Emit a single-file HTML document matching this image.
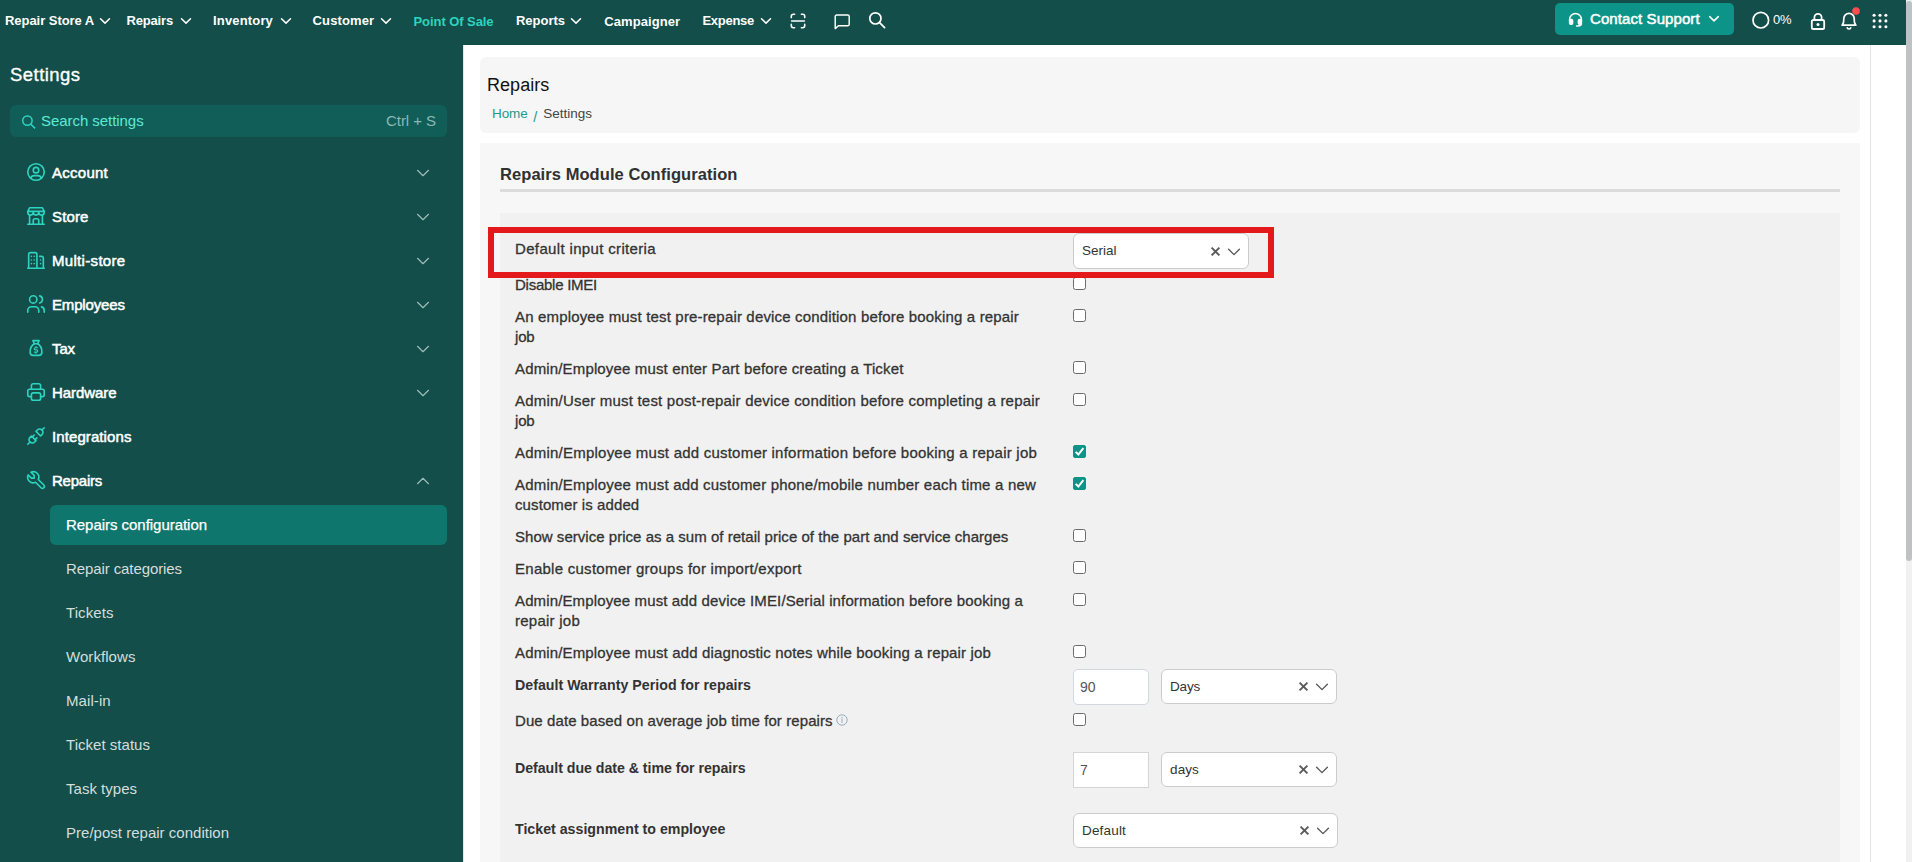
<!DOCTYPE html>
<html lang="en">
<head>
<meta charset="utf-8">
<title>Repairs - Settings</title>
<style>
*{box-sizing:border-box;margin:0;padding:0}
html,body{width:1912px;height:862px;overflow:hidden;background:#fff}
body{font-family:"Liberation Sans",sans-serif;color:#333;position:relative}
.abs{position:absolute}
svg{display:block}
/* ---------- header ---------- */
#hdr{position:absolute;left:0;top:0;width:1906px;height:45px;background:#134e4a}
.nav{position:absolute;top:0;height:41px;line-height:41px;color:#fff;font-size:13px;font-weight:bold;white-space:nowrap}
.nav.pos{color:#2dd4bf}
.chev{position:absolute;top:15px;width:12px;height:12px}
.hic{position:absolute}
#support{position:absolute;left:1555px;top:3px;width:179px;height:32px;border-radius:5px;background:#0d9488;color:#fff}
#support>span{position:absolute;left:35px;top:0;line-height:32px;font-size:15px;white-space:nowrap;-webkit-text-stroke:.5px #fff}
/* ---------- sidebar ---------- */
#side{position:absolute;left:0;top:45px;width:463px;height:817px;background:#134e4a}
#side h2{position:absolute;left:10px;top:18px;font-size:18.5px;line-height:24px;font-weight:normal;color:#fff;-webkit-text-stroke:.35px #fff}
#search{position:absolute;left:10px;top:60px;width:437px;height:32px;border-radius:6px;background:#115e59}
#search .ph{position:absolute;left:31px;top:0;line-height:32px;font-size:15px;color:#5eead4}
#search .kb{position:absolute;right:11px;top:0;line-height:32px;font-size:15px;color:#8ab8b3}
.mi{position:absolute;left:52px;height:24px;line-height:24px;font-size:15px;color:#fff;white-space:nowrap;-webkit-text-stroke:.5px #fff}
.mic{position:absolute;left:25px;width:22px;height:22px}
.mch{position:absolute;left:416px;width:14px;height:14px}
.si{position:absolute;left:66px;height:24px;line-height:24px;font-size:15px;color:#d4dedd;white-space:nowrap}
#sel{position:absolute;left:50px;top:460px;width:397px;height:40px;border-radius:6px;background:#0f766e}
/* ---------- main ---------- */
#vline{position:absolute;left:463px;top:45px;width:1px;height:817px;background:#e3e3ee}
#vline2{position:absolute;left:1870px;top:45px;width:1px;height:817px;background:#e3e3ee}
#card1{position:absolute;left:480px;top:57px;width:1380px;height:76px;border-radius:6px;background:#f6f6f6}
#card2{position:absolute;left:480px;top:143px;width:1380px;height:740px;background:#f7f7f7}
#panel{position:absolute;left:500px;top:213px;width:1340px;height:660px;background:#f1f1f1}
#hr{position:absolute;left:500px;top:189px;width:1340px;height:3px;background:#dcdcdc}
.lbl{position:absolute;left:515px;font-size:15px;line-height:20px;color:#333;white-space:nowrap;-webkit-text-stroke:.3px #333}
.lbl.b{font-weight:bold;-webkit-text-stroke:0;font-size:14.2px}
.cb svg{position:absolute;left:-1px;top:-1px}
.cb{position:absolute;left:1073px;width:13px;height:13px;border:1px solid #6b6b6b;border-radius:2.5px;background:#fff}
.cb.on{background:#0d9488;border-color:#0d9488;border-radius:2px}
.sel{position:absolute;height:35px;border:1px solid #ccc;border-radius:6px;background:#fff;font-size:13.5px;color:#333}
.sel span.v{position:absolute;left:8px;top:0;line-height:33px}
.inp{position:absolute;left:1073px;width:76px;height:36px;border:1px solid #d5d5d5;background:#fff;font-size:14px;color:#555}
.inp span{position:absolute;left:6px;top:0;line-height:34px}
/* scrollbar */
#sbt{position:absolute;left:1906px;top:0;width:6px;height:862px;background:#f1f1f1}
#sbh{position:absolute;left:1906px;top:1px;width:6px;height:560px;background:#c0c1c5;border-radius:3px}
.slash{color:#1f9a8a;display:inline-block;margin:0 6px 0 5.500px;position:relative;top:3.500px;font-size:14.500px;line-height:14px}
#ttl{left:487px;top:71px;line-height:28px;font-size:18px;color:#111;white-space:nowrap}
#bc{left:492px;top:104px;line-height:20px;font-size:13.5px;color:#444;white-space:nowrap}
#h3{left:500px;top:162px;line-height:24px;font-size:16.5px;font-weight:bold;color:#303030;white-space:nowrap}
#red{left:488px;top:227px;width:786px;height:51px;border:6px solid #e3191c}
.si.on{color:#fff;-webkit-text-stroke:.25px #fff}
</style>
</head>
<body>
<div id="hdr">
<div class="nav" style="left:5px;top:0px"><span class="ln" id="n0" style="letter-spacing:-0.045px;">Repair Store A</span></div><svg class="chev" style="left:99.4px" viewBox="0 0 12 12"><path d="M1.5 3.7 L6 8.1 L10.5 3.7" fill="none" stroke="#fff" stroke-width="1.5" stroke-linecap="round" stroke-linejoin="round"/></svg>
<div class="nav" style="left:126.5px;top:0px"><span class="ln" id="n1" style="letter-spacing:-0.172px;">Repairs</span></div><svg class="chev" style="left:179.5px" viewBox="0 0 12 12"><path d="M1.5 3.7 L6 8.1 L10.5 3.7" fill="none" stroke="#fff" stroke-width="1.5" stroke-linecap="round" stroke-linejoin="round"/></svg>
<div class="nav" style="left:213px;top:0px"><span class="ln" id="n2" style="letter-spacing:0.165px;">Inventory</span></div><svg class="chev" style="left:279.5px" viewBox="0 0 12 12"><path d="M1.5 3.7 L6 8.1 L10.5 3.7" fill="none" stroke="#fff" stroke-width="1.5" stroke-linecap="round" stroke-linejoin="round"/></svg>
<div class="nav" style="left:312.6px;top:0px"><span class="ln" id="n3" style="letter-spacing:0.114px;">Customer</span></div><svg class="chev" style="left:380px" viewBox="0 0 12 12"><path d="M1.5 3.7 L6 8.1 L10.5 3.7" fill="none" stroke="#fff" stroke-width="1.5" stroke-linecap="round" stroke-linejoin="round"/></svg>
<div class="nav pos" style="left:413.5px;top:1px"><span class="ln" id="n4" style="letter-spacing:-0.070px;">Point Of Sale</span></div>
<div class="nav" style="left:516px;top:0px"><span class="ln" id="n5" style="letter-spacing:-0.018px;">Reports</span></div><svg class="chev" style="left:570px" viewBox="0 0 12 12"><path d="M1.5 3.7 L6 8.1 L10.5 3.7" fill="none" stroke="#fff" stroke-width="1.5" stroke-linecap="round" stroke-linejoin="round"/></svg>
<div class="nav" style="left:604.3px;top:1px"><span class="ln" id="n6" style="letter-spacing:0.066px;">Campaigner</span></div>
<div class="nav" style="left:702.4px;top:0px"><span class="ln" id="n7" style="letter-spacing:-0.269px;">Expense</span></div><svg class="chev" style="left:760px" viewBox="0 0 12 12"><path d="M1.5 3.7 L6 8.1 L10.5 3.7" fill="none" stroke="#fff" stroke-width="1.5" stroke-linecap="round" stroke-linejoin="round"/></svg>
<svg class="hic" style="left:789px;top:12px" width="18" height="18" viewBox="0 0 18 18" fill="none" stroke="#fff" stroke-width="1.6" stroke-linecap="round" stroke-linejoin="round"><path d="M2.3 5.6V4.2a1.9 1.9 0 0 1 1.9-1.9h1.4M12.4 2.3h1.4a1.9 1.9 0 0 1 1.9 1.9v1.4M15.7 12.4v1.4a1.9 1.9 0 0 1-1.9 1.9h-1.4M5.6 15.7H4.2a1.9 1.9 0 0 1-1.9-1.9v-1.4M2.6 9h12.8"/></svg>
<svg class="hic" style="left:833px;top:13px" width="18" height="18" viewBox="0 0 18 18" fill="none" stroke="#fff" stroke-width="1.45" stroke-linecap="round" stroke-linejoin="round"><path d="M16.2 11.2a1.6 1.6 0 0 1-1.6 1.6H5.4L2.2 15.6V3.6A1.6 1.6 0 0 1 3.8 2h10.8a1.6 1.6 0 0 1 1.6 1.6z"/></svg>
<svg class="hic" style="left:868px;top:11px" width="18" height="18" viewBox="0 0 18 18" fill="none" stroke="#fff" stroke-width="1.7" stroke-linecap="round"><circle cx="7.4" cy="7.4" r="5.6"/><path d="M11.6 11.6l5 5"/></svg>
<div id="support"><svg class="hic" style="left:13px;top:9px" width="15" height="15" viewBox="0 0 15 15" fill="none" stroke="#fff" stroke-width="1.5" stroke-linecap="round" stroke-linejoin="round"><path d="M1.6 9V7.4a5.9 5.9 0 0 1 11.8 0V9"/><rect x="1.6" y="7.6" width="3" height="4.6" rx="1.2" fill="#fff"/><rect x="10.400" y="7.600" width="3" height="4.600" rx="1.200" fill="#fff"/><path d="M13.4 11.6c0 1.6-1.4 2.4-3.4 2.4H8.6"/></svg><span><span class="ln" id="cs" style="letter-spacing:0.086px;">Contact Support</span></span><svg class="hic" style="left:153px;top:10px" width="12" height="12" viewBox="0 0 12 12"><path d="M1.7 3.7 L6 7.8 L10.3 3.7" fill="none" stroke="#fff" stroke-width="1.6" stroke-linecap="round" stroke-linejoin="round"/></svg></div>
<svg class="hic" style="left:1751px;top:10px" width="20" height="20" viewBox="0 0 20 20"><circle cx="9.8" cy="10.2" r="7.8" fill="none" stroke="#fff" stroke-width="1.7"/></svg>
<div class="abs" style="left:1773px;top:10px;line-height:20px;font-size:13px;color:#fff;letter-spacing:-.2px">0%</div>
<svg class="hic" style="left:1809px;top:12px" width="18" height="19" viewBox="0 0 18 19" fill="none" stroke="#fff" stroke-width="1.8" stroke-linejoin="round"><rect x="2.8" y="8" width="12.4" height="9" rx="1.6"/><path d="M5.4 8V5.4a3.6 3.6 0 0 1 7.2 0V8"/><circle cx="9" cy="12.6" r="1.5" fill="#fff" stroke="none"/></svg>
<svg class="hic" style="left:1839px;top:6px" width="24" height="26" viewBox="0 0 24 26" fill="none" stroke="#fff" stroke-width="1.7" stroke-linecap="round" stroke-linejoin="round"><path d="M4.6 14.4c0-1 .2-2 .2-3.2a5.2 5.2 0 0 1 10.400 0c0 1.200 .2 2.200 .2 3.200 0 1.400 1.400 2.600 1.400 3.400H3.200c0-.8 1.400-2 1.400-3.400z" transform="translate(0,1.400)"/><path d="M8.300 21.800a1.900 1.900 0 0 0 3.400 0"/><circle cx="17" cy="5" r="3.800" fill="#ff4d4f" stroke="none"/></svg>
<svg class="hic" style="left:1871px;top:12px" width="18" height="18" viewBox="0 0 18 18" fill="#fff"><circle cx="3.100" cy="3.200" r="1.550"/><circle cx="9" cy="3.200" r="1.550"/><circle cx="14.900" cy="3.200" r="1.550"/><circle cx="3.100" cy="8.900" r="1.550"/><circle cx="9" cy="8.900" r="1.550"/><circle cx="14.900" cy="8.900" r="1.550"/><circle cx="3.100" cy="14.800" r="1.550"/><circle cx="9" cy="14.800" r="1.550"/><circle cx="14.900" cy="14.800" r="1.550"/></svg>
</div>
<div id="side">
<h2><span class="ln" id="sh" style="letter-spacing:0.455px;">Settings</span></h2>
<div id="search"><svg class="hic" style="left:11px;top:9px" width="16" height="16" viewBox="0 0 16 16" fill="none" stroke="#2dd4bf" stroke-width="1.500" stroke-linecap="round"><circle cx="6.400" cy="6.600" r="4.700"/><path d="M9.900 10.200l3.700 3.700"/></svg><span class="ph"><span class="ln" id="sp" style="letter-spacing:-0.053px;">Search settings</span></span><span class="kb"><span class="ln" id="sk" style="letter-spacing:-0.055px;">Ctrl + S</span></span></div>
<svg class="mic" style="top:116px" viewBox="0 0 24 24" fill="none" stroke="#2dd4bf" stroke-width="1.75" stroke-linecap="round" stroke-linejoin="round"><path d="M12 12m-9 0a9 9 0 1 0 18 0a9 9 0 1 0 -18 0"/><path d="M12 10m-3 0a3 3 0 1 0 6 0a3 3 0 1 0 -6 0"/><path d="M6.168 18.849a4 4 0 0 1 3.832 -2.849h4a4 4 0 0 1 3.834 2.855"/></svg>
<div class="mi" style="top:116px"><span class="ln" id="m0" style="letter-spacing:0.257px;">Account</span></div>
<svg class="mch" style="top:121px" viewBox="0 0 14 14"><path d="M1.5 4.3 L7 9.7 L12.5 4.3" fill="none" stroke="#9cbcb9" stroke-width="1.2" stroke-linecap="round" stroke-linejoin="round"/></svg>
<svg class="mic" style="top:160px" viewBox="0 0 24 24" fill="none" stroke="#2dd4bf" stroke-width="1.75" stroke-linecap="round" stroke-linejoin="round"><path d="M3 21l18 0"/><path d="M3 7v1a3 3 0 0 0 6 0v-1m0 1a3 3 0 0 0 6 0v-1m0 1a3 3 0 0 0 6 0v-1h-18l2 -4h14l2 4"/><path d="M5 21l0 -10.150"/><path d="M19 21l0 -10.150"/><path d="M9 21v-4a2 2 0 0 1 2 -2h2a2 2 0 0 1 2 2v4"/></svg>
<div class="mi" style="top:160px"><span class="ln" id="m1" style="letter-spacing:0.128px;">Store</span></div>
<svg class="mch" style="top:165px" viewBox="0 0 14 14"><path d="M1.5 4.3 L7 9.7 L12.5 4.3" fill="none" stroke="#9cbcb9" stroke-width="1.2" stroke-linecap="round" stroke-linejoin="round"/></svg>
<svg class="mic" style="top:204px" viewBox="0 0 24 24" fill="none" stroke="#2dd4bf" stroke-width="1.75" stroke-linecap="round" stroke-linejoin="round"><path d="M4 21v-15c0 -1 1 -2 2 -2h5c1 0 2 1 2 2v15"/><path d="M16 8h2c1 0 2 1 2 2v11"/><path d="M3 21h18"/><path d="M10 12v.01M10 16v.01M10 8v.01M7 12v.01M7 16v.01M7 8v.01M17 12v.01M17 16v.01"/></svg>
<div class="mi" style="top:204px"><span class="ln" id="m2" style="letter-spacing:0.317px;">Multi-store</span></div>
<svg class="mch" style="top:209px" viewBox="0 0 14 14"><path d="M1.5 4.3 L7 9.7 L12.5 4.3" fill="none" stroke="#9cbcb9" stroke-width="1.2" stroke-linecap="round" stroke-linejoin="round"/></svg>
<svg class="mic" style="top:248px" viewBox="0 0 24 24" fill="none" stroke="#2dd4bf" stroke-width="1.75" stroke-linecap="round" stroke-linejoin="round"><path d="M9 7m-4 0a4 4 0 1 0 8 0a4 4 0 1 0 -8 0"/><path d="M3 21v-2a4 4 0 0 1 4 -4h4a4 4 0 0 1 4 4v2"/><path d="M16 3.130a4 4 0 0 1 0 7.750"/><path d="M21 21v-2a4 4 0 0 0 -3 -3.850"/></svg>
<div class="mi" style="top:248px"><span class="ln" id="m3" style="letter-spacing:-0.156px;">Employees</span></div>
<svg class="mch" style="top:253px" viewBox="0 0 14 14"><path d="M1.5 4.3 L7 9.7 L12.5 4.3" fill="none" stroke="#9cbcb9" stroke-width="1.2" stroke-linecap="round" stroke-linejoin="round"/></svg>
<svg class="mic" style="top:292px" viewBox="0 0 24 24" fill="none" stroke="#2dd4bf" stroke-width="1.75" stroke-linecap="round" stroke-linejoin="round"><path d="M8.600 4h6.800l-1.700 3.400h-3.400z"/><path d="M10.300 7.400c-3.200 1.700 -4.700 6 -4.700 9.100a3.500 3.500 0 0 0 3.500 3.500h5.800a3.500 3.500 0 0 0 3.500 -3.500c0 -3.100 -1.500 -7.400 -4.700 -9.100"/><path d="M13.800 11.700h-2.500a1.200 1.200 0 0 0 0 2.400h1.400a1.200 1.200 0 0 1 0 2.400h-2.500M12 10.500v1.200M12 16.500v1.200" stroke-width="1.300"/></svg>
<div class="mi" style="top:292px"><span class="ln" id="m4" style="letter-spacing:-0.115px;">Tax</span></div>
<svg class="mch" style="top:297px" viewBox="0 0 14 14"><path d="M1.5 4.3 L7 9.7 L12.5 4.3" fill="none" stroke="#9cbcb9" stroke-width="1.2" stroke-linecap="round" stroke-linejoin="round"/></svg>
<svg class="mic" style="top:336px" viewBox="0 0 24 24" fill="none" stroke="#2dd4bf" stroke-width="1.75" stroke-linecap="round" stroke-linejoin="round"><path d="M17 17h2a2 2 0 0 0 2 -2v-4a2 2 0 0 0 -2 -2h-14a2 2 0 0 0 -2 2v4a2 2 0 0 0 2 2h2"/><path d="M17 9v-4a2 2 0 0 0 -2 -2h-6a2 2 0 0 0 -2 2v4"/><path d="M7 13m0 2a2 2 0 0 1 2 -2h6a2 2 0 0 1 2 2v4a2 2 0 0 1 -2 2h-6a2 2 0 0 1 -2 -2z"/></svg>
<div class="mi" style="top:336px"><span class="ln" id="m5" style="letter-spacing:-0.066px;">Hardware</span></div>
<svg class="mch" style="top:341px" viewBox="0 0 14 14"><path d="M1.5 4.3 L7 9.7 L12.5 4.3" fill="none" stroke="#9cbcb9" stroke-width="1.2" stroke-linecap="round" stroke-linejoin="round"/></svg>
<svg class="mic" style="top:380px" viewBox="0 0 24 24" fill="none" stroke="#2dd4bf" stroke-width="1.75" stroke-linecap="round" stroke-linejoin="round"><path d="M7 12l5 5l-1.500 1.500a3.536 3.536 0 1 1 -5 -5l1.500 -1.500z"/><path d="M17 12l-5 -5l1.500 -1.500a3.536 3.536 0 1 1 5 5l-1.500 1.500z"/><path d="M3 21l2.500 -2.500"/><path d="M18.500 5.500l2.500 -2.500"/><path d="M10 11l-2 2"/><path d="M13 14l-2 2"/></svg>
<div class="mi" style="top:380px"><span class="ln" id="m6" style="letter-spacing:0.092px;">Integrations</span></div>
<svg class="mic" style="top:424px" viewBox="0 0 24 24" fill="none" stroke="#2dd4bf" stroke-width="1.75" stroke-linecap="round" stroke-linejoin="round"><path d="M7 10h3v-3l-3.500 -3.500a6 6 0 0 1 8 8l6 6a2 2 0 0 1 -3 3l-6 -6a6 6 0 0 1 -8 -8l3.500 3.500"/></svg>
<div class="mi" style="top:424px"><span class="ln" id="m7" style="letter-spacing:-0.241px;">Repairs</span></div>
<svg class="mch" style="top:429px" viewBox="0 0 14 14"><path d="M1.5 9.7 L7 4.3 L12.5 9.7" fill="none" stroke="#9cbcb9" stroke-width="1.2" stroke-linecap="round" stroke-linejoin="round"/></svg>
<div id="sel"></div>
<div class="si on" style="top:468px"><span class="ln" id="u0" style="letter-spacing:-0.036px;">Repairs configuration</span></div>
<div class="si" style="top:512px"><span class="ln" id="u1" style="letter-spacing:-0.092px;">Repair categories</span></div>
<div class="si" style="top:556px"><span class="ln" id="u2" style="letter-spacing:0.078px;">Tickets</span></div>
<div class="si" style="top:600px"><span class="ln" id="u3" style="letter-spacing:0.066px;">Workflows</span></div>
<div class="si" style="top:644px"><span class="ln" id="u4" style="letter-spacing:0.087px;">Mail-in</span></div>
<div class="si" style="top:688px"><span class="ln" id="u5" style="letter-spacing:0.028px;">Ticket status</span></div>
<div class="si" style="top:732px"><span class="ln" id="u6" style="letter-spacing:0.022px;">Task types</span></div>
<div class="si" style="top:776px"><span class="ln" id="u7" style="letter-spacing:0.016px;">Pre/post repair condition</span></div>
</div>
<div id="vline"></div><div id="vline2"></div>
<div id="card1"></div>
<div id="card2"></div>
<div id="hr"></div>
<div id="panel"></div>
<div class="abs" id="ttl"><span class="ln" id="t0" style="letter-spacing:0.053px;">Repairs</span></div>
<div class="abs" id="bc"><span class="ln" id="b0" style="letter-spacing:-0.079px;color:#1f9a8a">Home</span><span class="slash">/</span><span class="ln" id="b1" style="letter-spacing:0.002px;">Settings</span></div>
<div class="abs" id="h3"><span class="ln" id="t1" style="letter-spacing:0.068px;">Repairs Module Configuration</span></div>
<div class="lbl" style="top:239px"><span class="ln" id="l0_0" style="letter-spacing:0.345px;">Default input criteria</span></div>
<div class="lbl" style="top:275px"><span class="ln" id="l1_0" style="letter-spacing:-0.253px;">Disable IMEI</span></div>
<div class="cb" style="top:277px"></div>
<div class="lbl" style="top:307px"><span class="ln" id="l2_0" style="letter-spacing:0.165px;">An employee must test pre-repair device condition before booking a repair</span><br><span class="ln" id="l2_1" style="letter-spacing:-0.177px;">job</span></div>
<div class="cb" style="top:309px"></div>
<div class="lbl" style="top:359px"><span class="ln" id="l3_0" style="letter-spacing:0.151px;">Admin/Employee must enter Part before creating a Ticket</span></div>
<div class="cb" style="top:361px"></div>
<div class="lbl" style="top:391px"><span class="ln" id="l4_0" style="letter-spacing:0.205px;">Admin/User must test post-repair device condition before completing a repair</span><br><span class="ln" id="l4_1" style="letter-spacing:-0.177px;">job</span></div>
<div class="cb" style="top:393px"></div>
<div class="lbl" style="top:443px"><span class="ln" id="l5_0" style="letter-spacing:0.221px;">Admin/Employee must add customer information before booking a repair job</span></div>
<div class="cb on" style="top:445px"><svg width="13" height="13" viewBox="0 0 13 13"><path d="M2.700 6.900l2.700 2.600L10.300 3.100" fill="none" stroke="#fff" stroke-width="2" stroke-linejoin="miter"/></svg></div>
<div class="lbl" style="top:475px"><span class="ln" id="l6_0" style="letter-spacing:0.195px;">Admin/Employee must add customer phone/mobile number each time a new</span><br><span class="ln" id="l6_1" style="letter-spacing:0.101px;">customer is added</span></div>
<div class="cb on" style="top:477px"><svg width="13" height="13" viewBox="0 0 13 13"><path d="M2.700 6.900l2.700 2.600L10.300 3.100" fill="none" stroke="#fff" stroke-width="2" stroke-linejoin="miter"/></svg></div>
<div class="lbl" style="top:527px"><span class="ln" id="l7_0" style="letter-spacing:0.031px;">Show service price as a sum of retail price of the part and service charges</span></div>
<div class="cb" style="top:529px"></div>
<div class="lbl" style="top:559px"><span class="ln" id="l8_0" style="letter-spacing:0.266px;">Enable customer groups for import/export</span></div>
<div class="cb" style="top:561px"></div>
<div class="lbl" style="top:591px"><span class="ln" id="l9_0" style="letter-spacing:0.132px;">Admin/Employee must add device IMEI/Serial information before booking a</span><br><span class="ln" id="l9_1" style="letter-spacing:0.245px;">repair job</span></div>
<div class="cb" style="top:593px"></div>
<div class="lbl" style="top:643px"><span class="ln" id="l10_0" style="letter-spacing:0.148px;">Admin/Employee must add diagnostic notes while booking a repair job</span></div>
<div class="cb" style="top:645px"></div>
<div class="lbl b" style="top:675px"><span class="ln" id="l11_0" style="letter-spacing:0.023px;">Default Warranty Period for repairs</span></div>
<div class="lbl" style="top:711px"><span class="ln" id="l12_0" style="letter-spacing:0.091px;">Due date based on average job time for repairs</span></div>
<div class="cb" style="top:713px"></div>
<div class="lbl b" style="top:758px"><span class="ln" id="l13_0" style="letter-spacing:-0.034px;">Default due date &amp; time for repairs</span></div>
<div class="lbl b" style="top:819px"><span class="ln" id="l14_0" style="letter-spacing:0.005px;">Ticket assignment to employee</span></div>
<svg class="abs" style="left:836px;top:714px" width="12" height="12" viewBox="0 0 12 12" fill="none" stroke="#8aa6b8" stroke-width=".9"><circle cx="6" cy="6" r="5.2"/><path d="M6 5.3v3.200M6 3.400v.6" stroke-linecap="round"/></svg>
<div class="sel" style="left:1073px;top:233px;width:176px;height:36px"><span class="v" style="line-height:34px"><span class="ln" id="s0" style="letter-spacing:-0.003px;">Serial</span></span><svg class="abs" style="right:27px;top:11.8px" width="11" height="11" viewBox="0 0 11 11"><path d="M1.600 1.600l7.800 7.800M9.400 1.600l-7.800 7.800" stroke="#5c5c5c" stroke-width="2" fill="none"/></svg><svg class="abs" style="right:7px;top:11.8px" width="14" height="12" viewBox="0 0 14 12"><path d="M1.600 3.200L7 8.600l5.400-5.400" stroke="#555" stroke-width="1.300" fill="none" stroke-linecap="round" stroke-linejoin="round"/></svg></div>
<div class="sel" style="left:1161px;top:669px;width:176px;height:35px"><span class="v" style="line-height:33px"><span class="ln" id="s1" style="letter-spacing:-0.191px;">Days</span></span><svg class="abs" style="right:27px;top:11.3px" width="11" height="11" viewBox="0 0 11 11"><path d="M1.600 1.600l7.800 7.800M9.400 1.600l-7.800 7.800" stroke="#5c5c5c" stroke-width="2" fill="none"/></svg><svg class="abs" style="right:7px;top:11.3px" width="14" height="12" viewBox="0 0 14 12"><path d="M1.600 3.200L7 8.600l5.400-5.400" stroke="#555" stroke-width="1.300" fill="none" stroke-linecap="round" stroke-linejoin="round"/></svg></div>
<div class="sel" style="left:1161px;top:752px;width:176px;height:35px"><span class="v" style="line-height:33px"><span class="ln" id="s2" style="letter-spacing:0.117px;">days</span></span><svg class="abs" style="right:27px;top:11.3px" width="11" height="11" viewBox="0 0 11 11"><path d="M1.600 1.600l7.800 7.800M9.400 1.600l-7.800 7.800" stroke="#5c5c5c" stroke-width="2" fill="none"/></svg><svg class="abs" style="right:7px;top:11.3px" width="14" height="12" viewBox="0 0 14 12"><path d="M1.600 3.200L7 8.600l5.400-5.400" stroke="#555" stroke-width="1.300" fill="none" stroke-linecap="round" stroke-linejoin="round"/></svg></div>
<div class="sel" style="left:1073px;top:813px;width:265px;height:35px"><span class="v" style="line-height:33px"><span class="ln" id="s3" style="letter-spacing:0.174px;">Default</span></span><svg class="abs" style="right:27px;top:11.3px" width="11" height="11" viewBox="0 0 11 11"><path d="M1.600 1.600l7.800 7.800M9.400 1.600l-7.800 7.800" stroke="#5c5c5c" stroke-width="2" fill="none"/></svg><svg class="abs" style="right:7px;top:11.3px" width="14" height="12" viewBox="0 0 14 12"><path d="M1.600 3.200L7 8.600l5.400-5.400" stroke="#555" stroke-width="1.300" fill="none" stroke-linecap="round" stroke-linejoin="round"/></svg></div>
<div class="inp" style="top:669px;border-radius:5px;border-color:#d3d7e0"><span>90</span></div>
<div class="inp" style="top:752px"><span>7</span></div>
<div class="abs" id="red"></div>
<div id="sbt"></div><div id="sbh"></div>
</body>
</html>
